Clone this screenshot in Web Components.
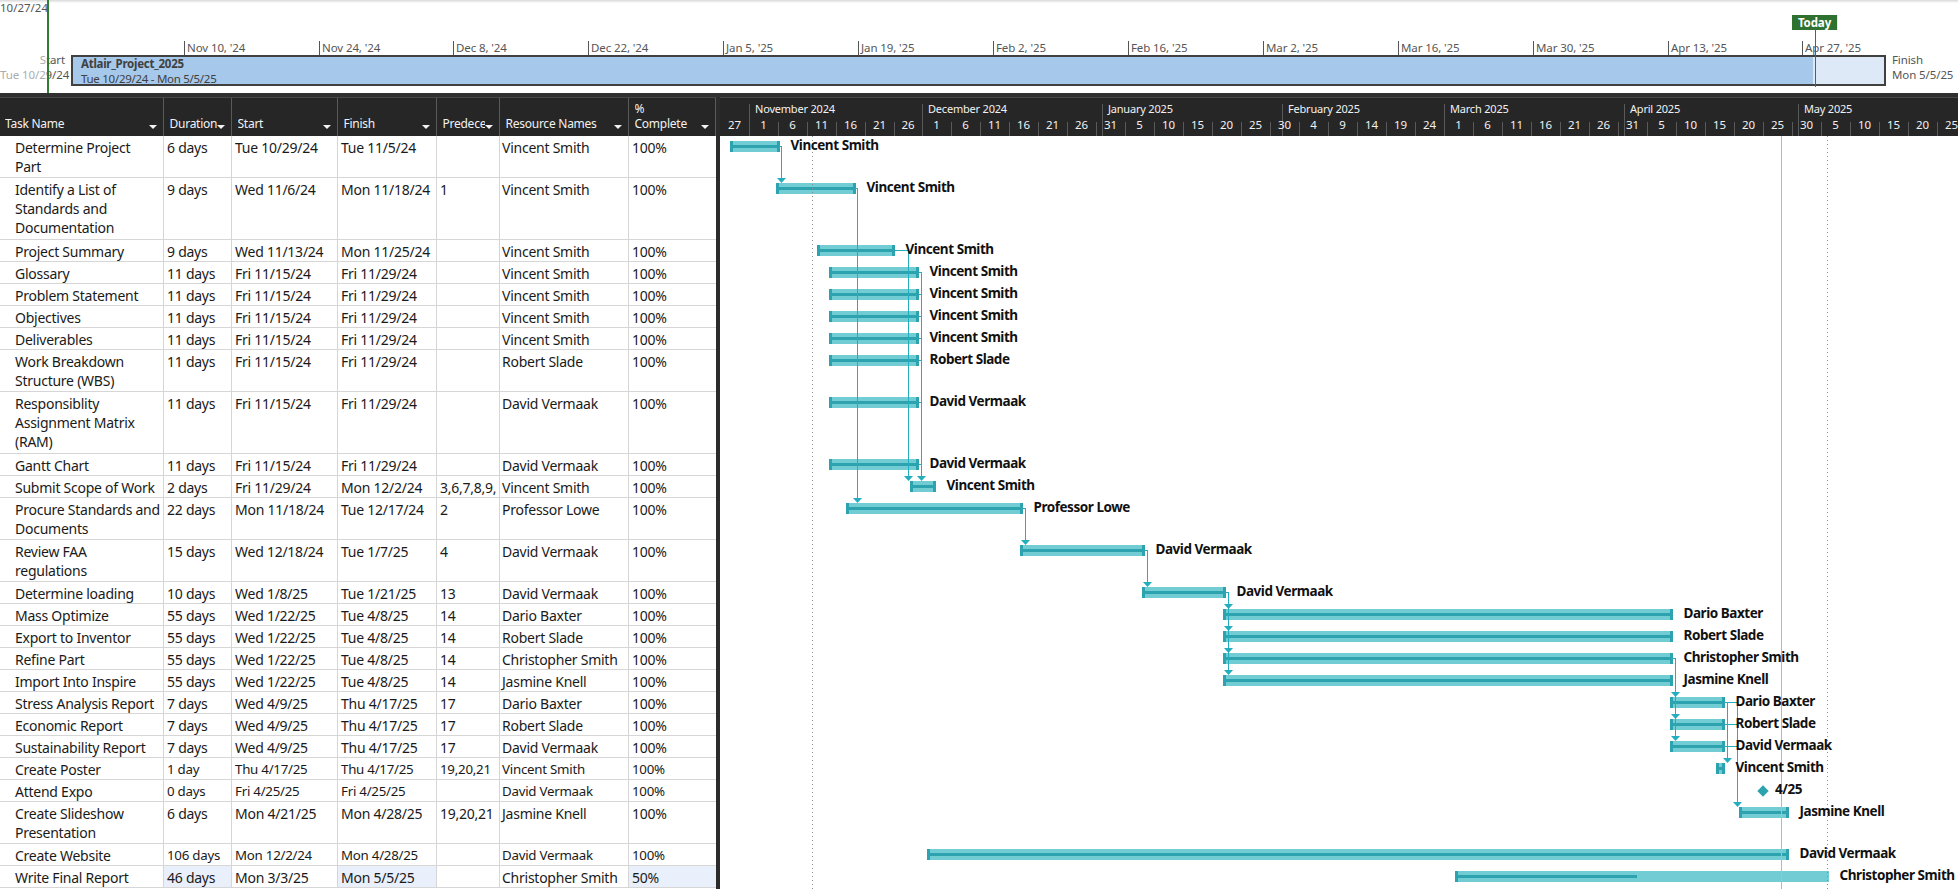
<!DOCTYPE html>
<html>
<head>
<meta charset="utf-8">
<style>
  html, body { margin: 0; height: 100%; background: #fff; overflow: hidden; }
  body { font-family: "Noto Sans", "Open Sans", sans-serif; }
  project-view { width: 1958px; height: 889px; }
</style>
</head>
<body>
<project-view></project-view>
<script>
const TASKS = [
  { name: 'Determine Project<br>Part', dur: '6 days', start: 'Tue 10/29/24', finish: 'Tue 11/5/24', pred: '', res: 'Vincent Smith', pct: '100%', lines: 2, x1: 730, x2: 780 },
  { name: 'Identify a List of Standards and Documentation', dur: '9 days', start: 'Wed 11/6/24', finish: 'Mon 11/18/24', pred: '1', res: 'Vincent Smith', pct: '100%', lines: 3, x1: 776, x2: 856 },
  { name: 'Project Summary', dur: '9 days', start: 'Wed 11/13/24', finish: 'Mon 11/25/24', pred: '', res: 'Vincent Smith', pct: '100%', lines: 1, x1: 817, x2: 895 },
  { name: 'Glossary', dur: '11 days', start: 'Fri 11/15/24', finish: 'Fri 11/29/24', pred: '', res: 'Vincent Smith', pct: '100%', lines: 1, x1: 829, x2: 919 },
  { name: 'Problem Statement', dur: '11 days', start: 'Fri 11/15/24', finish: 'Fri 11/29/24', pred: '', res: 'Vincent Smith', pct: '100%', lines: 1, x1: 829, x2: 919 },
  { name: 'Objectives', dur: '11 days', start: 'Fri 11/15/24', finish: 'Fri 11/29/24', pred: '', res: 'Vincent Smith', pct: '100%', lines: 1, x1: 829, x2: 919 },
  { name: 'Deliverables', dur: '11 days', start: 'Fri 11/15/24', finish: 'Fri 11/29/24', pred: '', res: 'Vincent Smith', pct: '100%', lines: 1, x1: 829, x2: 919 },
  { name: 'Work Breakdown Structure (WBS)', dur: '11 days', start: 'Fri 11/15/24', finish: 'Fri 11/29/24', pred: '', res: 'Robert Slade', pct: '100%', lines: 2, x1: 829, x2: 919 },
  { name: 'Responsiblity Assignment Matrix (RAM)', dur: '11 days', start: 'Fri 11/15/24', finish: 'Fri 11/29/24', pred: '', res: 'David Vermaak', pct: '100%', lines: 3, x1: 829, x2: 919 },
  { name: 'Gantt Chart', dur: '11 days', start: 'Fri 11/15/24', finish: 'Fri 11/29/24', pred: '', res: 'David Vermaak', pct: '100%', lines: 1, x1: 829, x2: 919 },
  { name: 'Submit Scope of Work', dur: '2 days', start: 'Fri 11/29/24', finish: 'Mon 12/2/24', pred: '3,6,7,8,9,', res: 'Vincent Smith', pct: '100%', lines: 1, x1: 910, x2: 936 },
  { name: 'Procure Standards and Documents', dur: '22 days', start: 'Mon 11/18/24', finish: 'Tue 12/17/24', pred: '2', res: 'Professor Lowe', pct: '100%', lines: 2, x1: 846, x2: 1023 },
  { name: 'Review FAA regulations', dur: '15 days', start: 'Wed 12/18/24', finish: 'Tue 1/7/25', pred: '4', res: 'David Vermaak', pct: '100%', lines: 2, x1: 1020, x2: 1145 },
  { name: 'Determine loading', dur: '10 days', start: 'Wed 1/8/25', finish: 'Tue 1/21/25', pred: '13', res: 'David Vermaak', pct: '100%', lines: 1, x1: 1142, x2: 1226 },
  { name: 'Mass Optimize', dur: '55 days', start: 'Wed 1/22/25', finish: 'Tue 4/8/25', pred: '14', res: 'Dario Baxter', pct: '100%', lines: 1, x1: 1223, x2: 1673 },
  { name: 'Export to Inventor', dur: '55 days', start: 'Wed 1/22/25', finish: 'Tue 4/8/25', pred: '14', res: 'Robert Slade', pct: '100%', lines: 1, x1: 1223, x2: 1673 },
  { name: 'Refine Part', dur: '55 days', start: 'Wed 1/22/25', finish: 'Tue 4/8/25', pred: '14', res: 'Christopher Smith', pct: '100%', lines: 1, x1: 1223, x2: 1673 },
  { name: 'Import Into Inspire', dur: '55 days', start: 'Wed 1/22/25', finish: 'Tue 4/8/25', pred: '14', res: 'Jasmine Knell', pct: '100%', lines: 1, x1: 1223, x2: 1673 },
  { name: 'Stress Analysis Report', dur: '7 days', start: 'Wed 4/9/25', finish: 'Thu 4/17/25', pred: '17', res: 'Dario Baxter', pct: '100%', lines: 1, x1: 1670, x2: 1725 },
  { name: 'Economic Report', dur: '7 days', start: 'Wed 4/9/25', finish: 'Thu 4/17/25', pred: '17', res: 'Robert Slade', pct: '100%', lines: 1, x1: 1670, x2: 1725 },
  { name: 'Sustainability Report', dur: '7 days', start: 'Wed 4/9/25', finish: 'Thu 4/17/25', pred: '17', res: 'David Vermaak', pct: '100%', lines: 1, x1: 1670, x2: 1725 },
  { name: 'Create Poster', dur: '1 day', start: 'Thu 4/17/25', finish: 'Thu 4/17/25', pred: '19,20,21', res: 'Vincent Smith', pct: '100%', lines: 1, x1: 1716, x2: 1725, small: true },
  { name: 'Attend Expo', dur: '0 days', start: 'Fri 4/25/25', finish: 'Fri 4/25/25', pred: '', res: 'David Vermaak', pct: '100%', lines: 1, milestone: 1763, label: '4/25', small: true },
  { name: 'Create Slideshow Presentation', dur: '6 days', start: 'Mon 4/21/25', finish: 'Mon 4/28/25', pred: '19,20,21', res: 'Jasmine Knell', pct: '100%', lines: 2, x1: 1739, x2: 1789 },
  { name: 'Create Website', dur: '106 days', start: 'Mon 12/2/24', finish: 'Mon 4/28/25', pred: '', res: 'David Vermaak', pct: '100%', lines: 1, x1: 927, x2: 1789, small: true },
  { name: 'Write Final Report', dur: '46 days', start: 'Mon 3/3/25', finish: 'Mon 5/5/25', pred: '', res: 'Christopher Smith', pct: '50%', lines: 1, x1: 1455, x2: 1829, done: 1637, changed: true }
];

// each link: from points on bars down to a vertical run, page coordinates
const LINKS = [
  { x: 781, y1: 146, y2: 183, stubs: [[780, 146]], arrows: [183] },
  { x: 857, y1: 188, y2: 503, stubs: [[856, 188]], arrows: [503] },
  { x: 908, y1: 250, y2: 481, stubs: [[895, 250]], arrows: [481] },
  { x: 921, y1: 272, y2: 481, stubs: [[919, 272], [919, 294], [919, 316], [919, 338], [919, 360], [919, 402], [919, 464]], arrows: [481] },
  { x: 1025, y1: 508, y2: 545, stubs: [[1023, 508]], arrows: [545] },
  { x: 1147, y1: 550, y2: 587, stubs: [[1145, 550]], arrows: [587] },
  { x: 1228, y1: 592, y2: 675, stubs: [[1226, 592]], arrows: [609, 631, 653, 675] },
  { x: 1675, y1: 658, y2: 741, stubs: [[1673, 658]], arrows: [697, 719, 741] },
  { x: 1727, y1: 702, y2: 763, stubs: [[1725, 702], [1725, 724], [1725, 746]], arrows: [763] },
  { x: 1737, y1: 702, y2: 807, stubs: [[1725, 702], [1725, 724], [1725, 746]], arrows: [807] }
];

const DAY_PX = 5.797;
const CHART_X = 719.6;

class TimelineStrip extends HTMLElement {
  connectedCallback() {
    const labels = ["Nov 10, '24", "Nov 24, '24", "Dec 8, '24", "Dec 22, '24", "Jan 5, '25", "Jan 19, '25", "Feb 2, '25",
      "Feb 16, '25", "Mar 2, '25", "Mar 16, '25", "Mar 30, '25", "Apr 13, '25", "Apr 27, '25"];
    const ticks = labels.map((t, i) => {
      const left = Math.round(183.6 + i * 134.9);
      return `<span class="tick" style="left:${left}px">${t}</span>`;
    }).join('');
    this.attachShadow({ mode: 'open' }).innerHTML = `
      <style>
        :host { display: block; position: relative; height: 93px; background: linear-gradient(#d8d8d8, #fff 3px); font-size: 11.5px; color: #555; overflow: hidden; letter-spacing: -0.1px; }
        .row { display: flex; padding-top: 55px; }
        .start { width: 65px; margin-right: 6px; text-align: right; white-space: nowrap; }
        .side { height: 31px; margin-top: -3.5px; line-height: 15px; }
        .bar { width: 1815px; height: 31px; box-sizing: border-box; border: 2px solid #404040; background: linear-gradient(90deg, #a6c8eb 1740px, #dde9f6 1740px); padding: 0 8px; line-height: 15px; color: #404040; white-space: nowrap; letter-spacing: -0.28px; }
        .bar b { display: block; font-weight: 700; margin-top: -1.5px; }
        .finish { margin-left: 6px; white-space: nowrap; }
        .tick { position: absolute; top: 41px; height: 14px; line-height: 14px; border-left: 1px solid #555; padding-left: 2px; white-space: nowrap; }
        .past { position: absolute; left: 0; top: 50px; width: 47px; height: 40px; background: rgba(255, 255, 255, .5); }
        .now { position: absolute; left: 47px; top: 0; width: 2px; height: 93px; background: #2e7d32; }
        .first { position: absolute; right: calc(100% - 48px); top: 0; line-height: 15px; white-space: nowrap; letter-spacing: 0; }
        .today { position: absolute; left: 1792px; top: 15px; width: 46px; height: 15px; background: #2e7130; color: #fff; font-weight: 700; font-size: 11.5px; line-height: 15px; text-align: center; border-right: 1px solid #dcefdc; box-sizing: border-box; }
        .today-line { position: absolute; left: 1815px; top: 30px; width: 1px; height: 57px; background: #2e7d32; }
      </style>
      <span class="first">Sun 10/27/24</span>
      ${ticks}
      <div class="row">
        <div class="start side">Start<br>Tue 10/29/24</div>
        <div class="bar"><b>Atlair_Project_2025</b>Tue 10/29/24 - Mon 5/5/25</div>
        <div class="finish side">Finish<br>Mon 5/5/25</div>
      </div>
      <div class="past"></div>
      <div class="now"></div>
      <div class="today">Today</div>
      <div class="today-line"></div>
    `;
  }
}

class TaskSheet extends HTMLElement {
  connectedCallback() {
    const heads = ['Task Name', 'Duration', 'Start', 'Finish', 'Predecessors', 'Resource Names', '%<br>Complete'];
    const head = heads.map(h => `<div class="hcell"><span class="htext">${h}</span><i></i></div>`).join('');
    const rows = TASKS.map(t => `
      <div class="row${t.small ? ' small' : ''}" style="height:${t.lines * 20 + 2}px">
        <div class="cell name">${t.name}</div>
        <div class="cell${t.changed ? ' hi' : ''}">${t.dur}</div>
        <div class="cell">${t.start}</div>
        <div class="cell${t.changed ? ' hi' : ''}">${t.finish}</div>
        <div class="cell">${t.pred}</div>
        <div class="cell res">${t.res}</div>
        <div class="cell${t.changed ? ' hi' : ''}">${t.pct}</div>
      </div>`).join('');
    this.attachShadow({ mode: 'open' }).innerHTML = `
      <style>
        :host { display: block; width: 716px; flex: none; overflow: hidden; color: #1a1a1a; }
        .row, .head { display: grid; grid-template-columns: 164px 68px 106px 99px 63px 129px 87px; }
        .head { height: 39px; background: #262626; color: #f2f2f2; font-size: 12px; letter-spacing: -0.25px; box-sizing: border-box; border-top: 1px solid #484848; }
        .hcell { display: flex; align-items: flex-end; border-right: 1px solid #5a5a5a; padding: 0 6px 4px 5px; min-width: 0; line-height: 15px; }
        .hcell:nth-child(n+2) { padding-left: 5.5px; }
        .htext { flex: 1; overflow: hidden; white-space: nowrap; margin-bottom: 1px; }
        .hcell i { flex: none; width: 0; height: 0; margin: 0 0 3px 0; border: 4px solid transparent; border-top-color: #f2f2f2; border-bottom-width: 0; }
        .row { font-size: 14px; line-height: 19px; letter-spacing: -0.25px; }
        .small { font-size: 13.3px; }
        .small .name { font-size: 14px; }
        .cell { border-right: 1px solid #d6d6d6; border-bottom: 1px solid #d6d6d6; padding: 2px 2px 0 3px; overflow: hidden; white-space: nowrap; box-sizing: border-box; }
        .cell.name { white-space: normal; padding-left: 15px; }
        .cell.res { padding-left: 2px; }
        .cell:last-child { border-right: 0; }
        .hi { background: #e9f0fc; }
      </style>
      <div class="head">${head}</div>
      ${rows}
    `;
  }
}

class TaskBar extends HTMLElement {
  connectedCallback() {
    this.attachShadow({ mode: 'open' }).innerHTML = `
      <style>
        :host { display: block; position: absolute; height: 11px; background: #72ccd3; }
        :host([milestone]) { background: none; }
        .done { position: absolute; left: 0; top: 4px; height: 3px; background: #2ca3ae; }
        .cap { position: absolute; top: 0; bottom: 0; width: 3px; background: #2ca3ae; }
        .cap.l { left: 0; }
        .cap.r { right: 0; }
        .gem { position: absolute; left: -4px; top: 1.5px; width: 8px; height: 8px; background: #2ca3ae; transform: rotate(45deg); }
        .label { position: absolute; left: calc(100% + 10.5px); top: -4px; z-index: 2; font-size: 13.5px; font-weight: 700; line-height: 16px; color: #111; white-space: nowrap; letter-spacing: -0.45px; }
        :host([milestone]) .label { left: 12px; }
      </style>
      ${this.hasAttribute('milestone') ? '<div class="gem"></div>' : `
      <div class="done" style="width:${this.getAttribute('done')}px"></div>
      <div class="cap l"></div>
      ${this.hasAttribute('open-end') ? '' : '<div class="cap r"></div>'}`}
      <div class="label"><slot></slot></div>
    `;
  }
}

class GanttChart extends HTMLElement {
  connectedCallback() {
    let months = '';
    [['November 2024', 5], ['December 2024', 35], ['January 2025', 66], ['February 2025', 97], ['March 2025', 125], ['April 2025', 156], ['May 2025', 186]].forEach(([m, d]) => {
      months += `<span class="month" style="left:${Math.round(CHART_X + d * DAY_PX - 720)}px">${m}</span>`;
    });
    let minors = '';
    const day = new Date(Date.UTC(2024, 9, 27));
    for (let i = 0; i < 43; i++) {
      const left = Math.round(CHART_X + i * 5 * DAY_PX - 720);
      const next = Math.round(CHART_X + (i + 1) * 5 * DAY_PX - 720);
      minors += `<span class="minor${i ? ' tick' : ''}" style="left:${left}px;width:${next - left}px">${day.getUTCDate()}</span>`;
      day.setUTCDate(day.getUTCDate() + 5);
    }

    let links = '';
    LINKS.forEach(l => {
      let d = `M${l.x + .5} ${l.y1}V${l.y2 - 4}`;
      l.stubs.forEach(([sx, sy]) => { d += `M${sx} ${sy + .5}H${l.x + .5}`; });
      links += `<path d="${d}"/>`;
      l.arrows.forEach(y => {
        links += `<polygon class="arrow" points="${l.x + .5},${y} ${l.x - 4},${y - 5} ${l.x + 5},${y - 5}"/>`;
      });
    });

    const root = this.attachShadow({ mode: 'open' });
    root.innerHTML = `
      <style>
        :host { display: block; flex: 1; min-width: 0; overflow: hidden; position: relative; }
        .head { position: relative; height: 39px; background: #262626; box-sizing: border-box; border-top: 1px solid #484848; color: #f2f2f2; font-size: 11.5px; letter-spacing: -0.1px; }
        .month { position: absolute; top: 4px; height: 15px; padding-left: 6px; line-height: 14px; font-size: 11px; letter-spacing: -0.2px; white-space: nowrap; }
        .month::before { content: ''; position: absolute; left: 0; top: 2px; width: 1px; height: 32px; background: #5a5a5a; }
        .minor { position: absolute; top: 19px; height: 19px; box-sizing: border-box; text-align: center; line-height: 15px; }
        .minor.tick::before { content: ''; position: absolute; left: 0; top: 5px; width: 1px; height: 14px; background: #5a5a5a; }
        .body { position: relative; height: 754px; margin-top: -1px; }
        svg { position: absolute; left: 0; top: 0; z-index: 1; }
        .links path { fill: none; stroke: #22aebd; stroke-width: 1; }
        .arrow { fill: #22aebd; }
        .today { stroke: #9ccb9c; stroke-width: 1; }
        .dots { stroke: #8a8a8a; stroke-width: 1; stroke-dasharray: 1 3; }
      </style>
      <div class="head">${months}${minors}</div>
      <div class="body">
        <svg class="links" width="1238" height="754" viewBox="720 135 1238 754">
          <line class="dots" x1="812.5" y1="136" x2="812.5" y2="889"/>
          <line class="dots" x1="1827.5" y1="136" x2="1827.5" y2="889"/>
          <line class="today" x1="1781.5" y1="136" x2="1781.5" y2="889"/>
          ${links}
        </svg>
      </div>
    `;

    // bars sit by date on the chart canvas
    const body = root.querySelector('.body');
    let y = 135;
    TASKS.forEach(t => {
      const bar = document.createElement('task-bar');
      bar.style.top = (y + 6 - 135) + 'px';
      if (t.milestone) {
        bar.setAttribute('milestone', '');
        bar.style.left = (t.milestone - 720) + 'px';
        bar.style.width = '0px';
        bar.textContent = t.label;
      } else {
        bar.style.left = (t.x1 - 720) + 'px';
        bar.style.width = (t.x2 - t.x1) + 'px';
        bar.setAttribute('done', (t.done || t.x2) - t.x1);
        if (t.done) bar.setAttribute('open-end', '');
        bar.textContent = t.res;
      }
      body.appendChild(bar);
      y += t.lines * 20 + 2;
    });
  }
}

class ProjectView extends HTMLElement {
  connectedCallback() {
    this.attachShadow({ mode: 'open' }).innerHTML = `
      <style>
        :host { display: flex; flex-direction: column; overflow: hidden; }
        .band { height: 4px; flex: none; background: #303030; }
        .split { display: flex; flex: 1; min-height: 0; }
        .divider { width: 4px; flex: none; background: #2b2b2b; }
      </style>
      <timeline-strip></timeline-strip>
      <div class="band"></div>
      <div class="split">
        <task-sheet></task-sheet>
        <div class="divider"></div>
        <gantt-chart></gantt-chart>
      </div>
    `;
  }
}

customElements.define('timeline-strip', TimelineStrip);
customElements.define('task-sheet', TaskSheet);
customElements.define('task-bar', TaskBar);
customElements.define('gantt-chart', GanttChart);
customElements.define('project-view', ProjectView);
</script>
</body>
</html>
